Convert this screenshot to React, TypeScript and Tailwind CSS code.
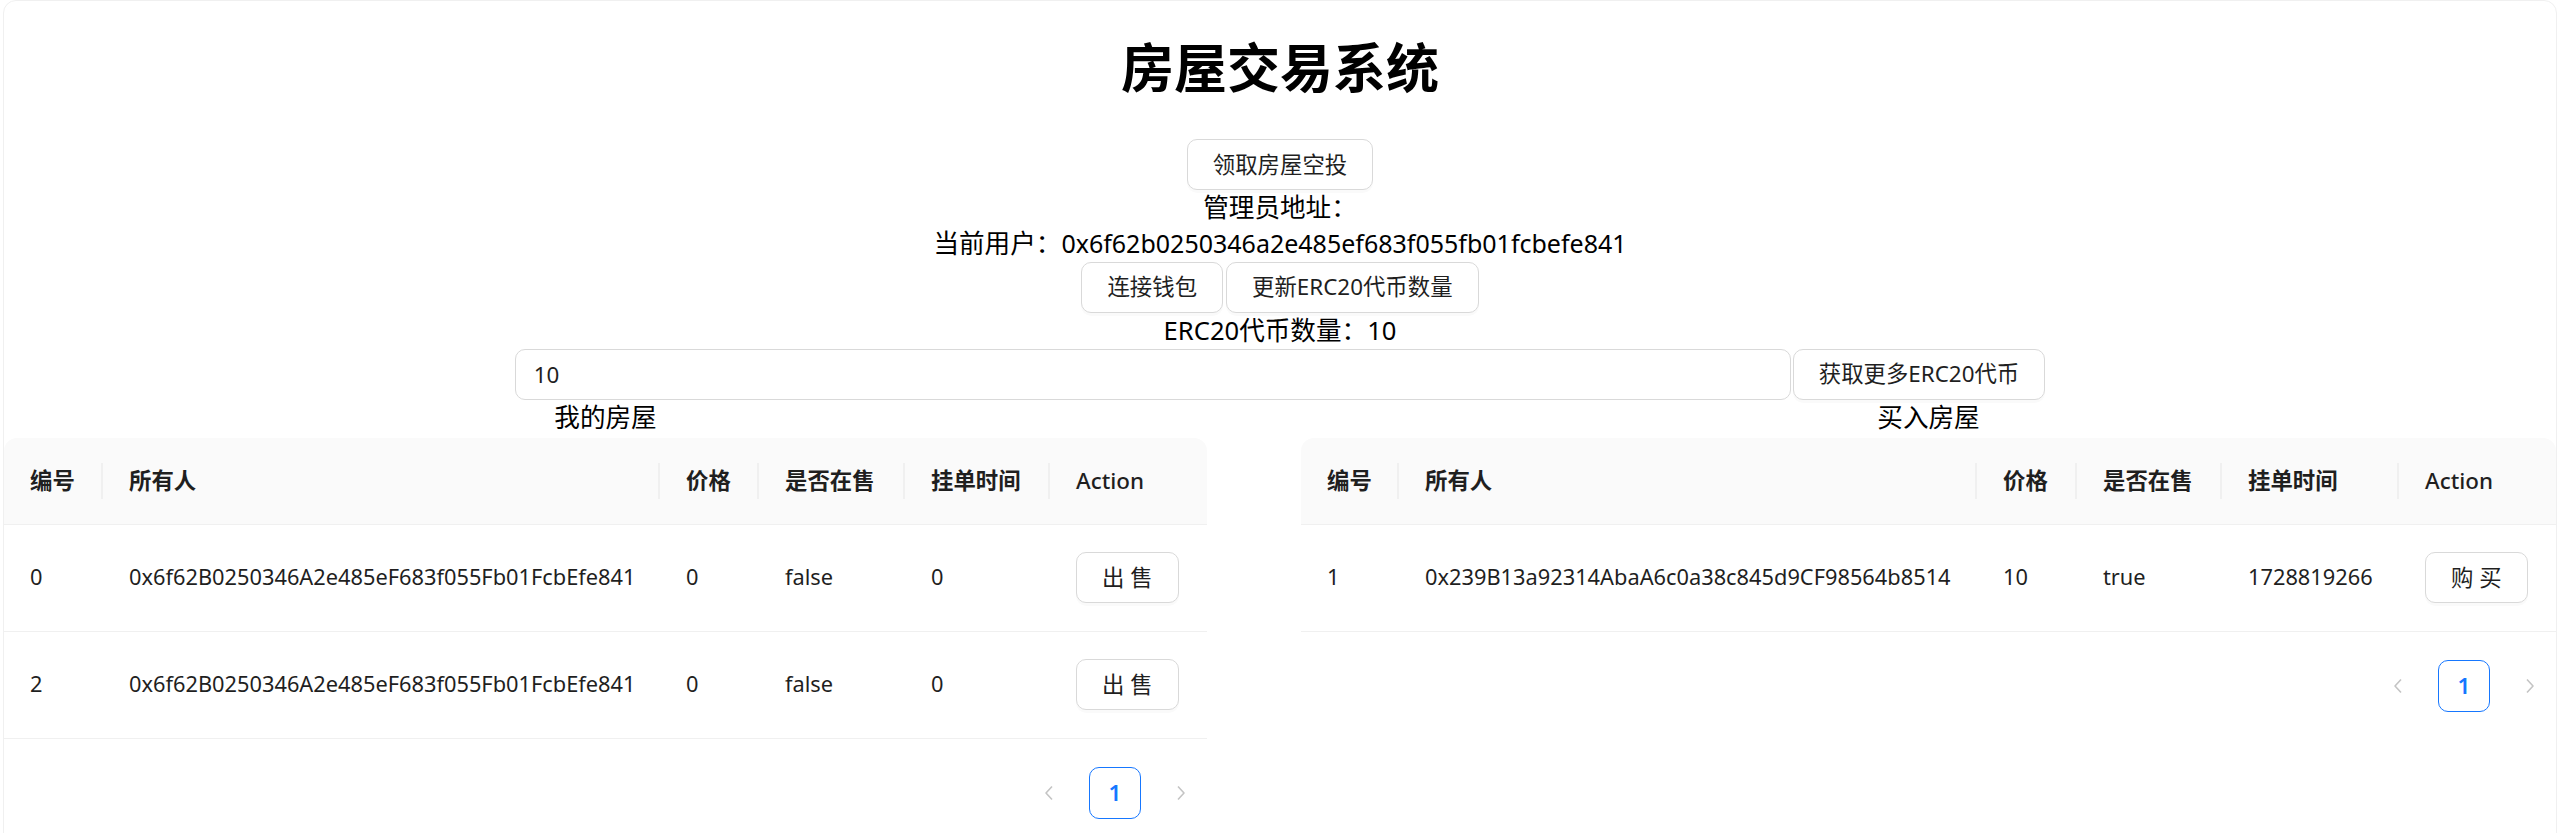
import React from "react";

type House = { id: string; owner: string; price: string; onSale: string; time: string };

const myHouses: House[] = [
    { id: "0", owner: "0x6f62B0250346A2e485eF683f055Fb01FcbEfe841", price: "0", onSale: "false", time: "0" },
    { id: "2", owner: "0x6f62B0250346A2e485eF683f055Fb01FcbEfe841", price: "0", onSale: "false", time: "0" },
];

const marketHouses: House[] = [
    { id: "1", owner: "0x239B13a92314AbaA6c0a38c845d9CF98564b8514", price: "10", onSale: "true", time: "1728819266" },
];

const headers = ["编号", "所有人", "价格", "是否在售", "挂单时间"];

const btn =
    "h-[51px] px-[25px] rounded-[10px] border border-[#d9d9d9] bg-white shadow-[0_3px_0_rgba(0,0,0,0.02)] text-[22.4px] leading-[32px] text-[#1f1f1f] whitespace-nowrap";

function Chevron({ dir }: { dir: "left" | "right" }) {
    return (
        <svg width="12" height="16" viewBox="0 0 12 16" fill="none">
            <polyline
                points={dir === "left" ? "9,1.5 3,8 9,14.5" : "3,1.5 9,8 3,14.5"}
                stroke="#c4c4c4"
                strokeWidth="1.6"
                strokeLinejoin="round"
            />
        </svg>
    );
}

function Pager() {
    return (
        <div className="flex justify-end gap-[14px] mt-[28px]">
            <div className="w-[52px] h-[52px] flex items-center justify-center">
                <Chevron dir="left" />
            </div>
            <div className="w-[52px] h-[52px] flex items-center justify-center rounded-[10px] border-[1.6px] border-[#1677ff] text-[#1677ff] font-semibold text-[22.4px]">
                1
            </div>
            <div className="w-[52px] h-[52px] flex items-center justify-center">
                <Chevron dir="right" />
            </div>
        </div>
    );
}

function HouseTable({ title, cols, width, rows, action }: { title: string; cols: string; width: string; rows: House[]; action: string }) {
    return (
        <div className={width}>
            <div className="h-[38px] text-center text-[25.6px] leading-[35.84px] text-black">{title}</div>
            <div className={`grid ${cols} h-[87px] items-center rounded-t-[13px] bg-[#fafafa] border-b border-[#f0f0f0] font-semibold text-[22.4px] text-[#1f1f1f]`}>
                {headers.map((h) => (
                    <div
                        key={h}
                        className="relative px-[26px] before:absolute before:right-0 before:top-1/2 before:-translate-y-1/2 before:h-[36px] before:w-[2px] before:bg-[#f0f0f0] before:content-['']"
                    >
                        {h}
                    </div>
                ))}
                <div className="px-[26px] font-medium">Action</div>
            </div>
            {rows.map((r) => (
                <div key={r.id} className={`grid ${cols} h-[107px] items-center border-b border-[#f0f0f0] text-[21.8px] text-[#1f1f1f]`}>
                    <div className="px-[26px]">{r.id}</div>
                    <div className="px-[26px] whitespace-nowrap">{r.owner}</div>
                    <div className="px-[26px]">{r.price}</div>
                    <div className="px-[26px]">{r.onSale}</div>
                    <div className="px-[26px]">{r.time}</div>
                    <div className="px-[26px]">
                        <button className={btn}>{action}</button>
                    </div>
                </div>
            ))}
            <Pager />
        </div>
    );
}

export default function App() {
    return (
        <div className="bg-white font-['Noto_Sans','Noto_Sans_CJK_SC',sans-serif]">
            <div className="mx-[3px] min-h-[860px] rounded-[13px] border border-[#f0f0f0] bg-white">
                <div className="flex flex-col items-center text-[25.6px] leading-[35.84px] text-black">
                    <h1 className="pt-[40px] pb-[45px] text-[53px] leading-[53px] font-bold">房屋交易系统</h1>
                    <button className={btn}>领取房屋空投</button>
                    <div>管理员地址：</div>
                    <div>
                        当前用户：<span className="text-[25px]">0x6f62b0250346a2e485ef683f055fb01fcbefe841</span>
                    </div>
                    <div className="flex gap-[3px]">
                        <button className={btn}>连接钱包</button>
                        <button className={btn}>更新ERC20代币数量</button>
                    </div>
                    <div>ERC20代币数量：10</div>
                    <div className="flex gap-[2px]">
                        <input
                            defaultValue="10"
                            className="w-[1276px] h-[51px] px-[18px] rounded-[10px] border border-[#d9d9d9] bg-white text-[22.4px] text-[#1f1f1f] outline-none"
                        />
                        <button className={btn}>获取更多ERC20代币</button>
                    </div>
                </div>
                <div className="flex justify-between">
                    <HouseTable
                        title="我的房屋"
                        width="w-[1203px]"
                        cols="grid-cols-[99px_557px_99px_146px_145px_157px]"
                        rows={myHouses}
                        action="出 售"
                    />
                    <HouseTable
                        title="买入房屋"
                        width="w-[1255px]"
                        cols="grid-cols-[98px_578px_100px_145px_177px_157px]"
                        rows={marketHouses}
                        action="购 买"
                    />
                </div>
            </div>
        </div>
    );
}
